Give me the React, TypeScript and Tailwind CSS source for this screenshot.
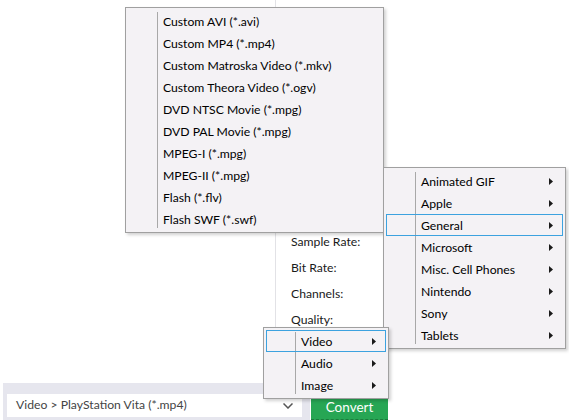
import React from 'react'

type Item = { label: string; sub?: boolean; active?: boolean }

const FONT = "font-['Segoe_UI','Lato',sans-serif]"

/** 右向きの小さな三角 */
function SubArrow() {
  return (
    <svg width="4" height="7" viewBox="0 0 4 7" className="absolute right-[10px] top-[8px]">
      <polygon points="0,0 4,3.5 0,7" fill="#1a1a1a" />
    </svg>
  )
}

function Menu({ items, className }: { items: Item[]; className: string }) {
  return (
    <div
      className={`absolute bg-[#f4f2f5] border border-[#a0a0a0] py-[2px] shadow-[2px_2px_3px_rgba(0,0,0,0.18)] ${className}`}
    >
      {/* アイコン列の区切り線 */}
      <div className="absolute left-[31px] top-[4px] bottom-[4px] w-px bg-[#a8a8a8]" />
      {items.map(it => (
        <div key={it.label} className="relative h-[22px] mx-[2px]">
          {it.active && <div className="absolute inset-0 border border-[#3ca2df]" />}
          <div className="absolute left-[35px] top-[1px] h-[22px] leading-[22px] text-[12.2px] text-black whitespace-nowrap">
            {it.label}
          </div>
          {it.sub && <SubArrow />}
        </div>
      ))}
    </div>
  )
}

const formatItems: Item[] = [
  { label: 'Custom AVI (*.avi)' },
  { label: 'Custom MP4 (*.mp4)' },
  { label: 'Custom Matroska Video (*.mkv)' },
  { label: 'Custom Theora Video (*.ogv)' },
  { label: 'DVD NTSC Movie (*.mpg)' },
  { label: 'DVD PAL Movie (*.mpg)' },
  { label: 'MPEG-I (*.mpg)' },
  { label: 'MPEG-II (*.mpg)' },
  { label: 'Flash (*.flv)' },
  { label: 'Flash SWF (*.swf)' },
]

const deviceItems: Item[] = [
  { label: 'Animated GIF', sub: true },
  { label: 'Apple', sub: true },
  { label: 'General', sub: true, active: true },
  { label: 'Microsoft', sub: true },
  { label: 'Misc. Cell Phones', sub: true },
  { label: 'Nintendo', sub: true },
  { label: 'Sony', sub: true },
  { label: 'Tablets', sub: true },
]

const typeItems: Item[] = [
  { label: 'Video', sub: true, active: true },
  { label: 'Audio', sub: true },
  { label: 'Image', sub: true },
]

export default function App() {
  return (
    <div className={`relative w-[569px] h-[420px] bg-white overflow-hidden ${FONT}`}>
      <div className="flex flex-col h-full">
        {/* 設定パネル */}
        <div className="flex-1 flex">
          <div className="w-[275px]" />
          <div className="border-l border-[#e2e2e6] pl-[15px] pt-[229px] flex flex-col text-[12.2px] text-[#1a1a1a]">
            {['Sample Rate:', 'Bit Rate:', 'Channels:', 'Quality:'].map(l => (
              <div key={l} className="h-[26px] leading-[26px]">
                {l}
              </div>
            ))}
          </div>
        </div>

        {/* 下部バー */}
        <div className="flex items-end pl-[3px]">
          <div className="w-[307px] h-[37px] bg-[#e6e6ee] pl-[4px] pt-[11px]">
            <div className="relative w-[295px] h-[23px] bg-white flex items-center pl-[9px] text-[12.2px] text-[#444]">
              Video &gt; PlayStation Vita (*.mp4)
              <svg width="10" height="6" viewBox="0 0 10 6" className="absolute right-[9px] top-[9px]">
                <polyline points="0.5,0.5 5,5 9.5,0.5" fill="none" stroke="#555" strokeWidth="1.5" />
              </svg>
            </div>
          </div>
          <div className="ml-[1px] w-[77px] h-[21px] bg-[#27a654] text-white text-[13.5px] leading-[14px] pt-[1px] text-center border-b border-dashed border-[#1c7a3c]">
            Convert
          </div>
        </div>
      </div>

      {/* ポップアップメニュー */}
      <Menu items={formatItems} className="left-[125px] top-[7px] w-[259px]" />
      <Menu items={deviceItems} className="left-[383px] top-[167px] w-[183px]" />
      <Menu items={typeItems} className="left-[263px] top-[327px] w-[126px] z-10" />
    </div>
  )
}
